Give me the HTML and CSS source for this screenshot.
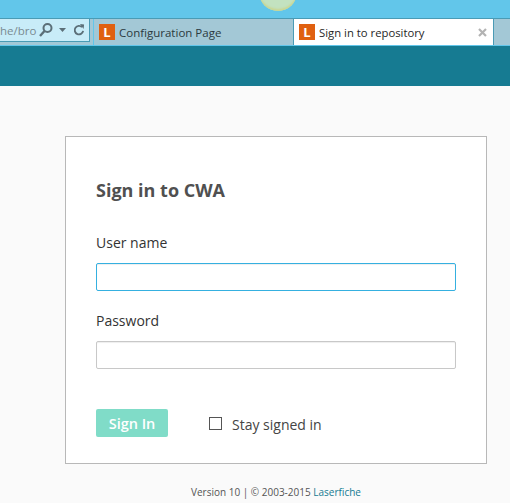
FILE: index.html
```html
<!DOCTYPE html>
<html lang="en">
<head>
    <meta charset="UTF-8">
    <title>Sign in to repository</title>
    <link rel="stylesheet" href="styles.css">
</head>
<body>

<div class="orb"></div>

<div class="chrome">
    <div class="tabrow">
        <div class="address">
            <span class="url">he/bro</span>
            <svg class="search" width="16" height="16" viewBox="0 0 16 16">
                <circle cx="9.5" cy="6" r="4" fill="none" stroke="#5b6f78" stroke-width="2"/>
                <path d="M6.5 9 L2 14" stroke="#5b6f78" stroke-width="2.4"/>
            </svg>
            <svg class="caret" width="7" height="4" viewBox="0 0 7 4">
                <path d="M0 0 H7 L3.5 4 Z" fill="#5b6f78"/>
            </svg>
            <svg class="reload" width="12" height="14" viewBox="0 0 13 14">
                <path d="M9.8 4 A4.6 4.6 0 1 0 11 8" fill="none" stroke="#5b6f78" stroke-width="2"/>
                <path d="M7.5 0.5 L12 1 L11.5 6 Z" fill="#5b6f78"/>
            </svg>
        </div>
        <div class="tab">
            <span class="favicon">L</span>
            <span class="tabtitle">Configuration Page</span>
        </div>
        <div class="tab active">
            <span class="favicon">L</span>
            <span class="tabtitle">Sign in to repository</span>
            <svg class="close" width="9" height="9" viewBox="0 0 9 9">
                <path d="M1 1 L8 8 M8 1 L1 8" stroke="#b3b3b3" stroke-width="2.2"/>
            </svg>
        </div>
    </div>
</div>

<header class="banner"></header>

<main class="page">
    <form class="card">
        <h1>Sign in to CWA</h1>

        <label class="field-label">User name</label>
        <input class="field focused" type="text">

        <label class="field-label">Password</label>
        <input class="field" type="password">

        <div class="actions">
            <button class="signin" type="button">Sign In</button>
            <span class="checkbox"></span>
            <span class="stay">Stay signed in</span>
        </div>
    </form>

    <footer class="version">Version 10 | © 2003-2015 <a href="#">Laserfiche</a></footer>
</main>

</body>
</html>
```

FILE: styles.css
```css
html, body {
    margin: 0;
    height: 503px;
    overflow: hidden;
}

body {
    background-color: #fafafa;
    font-family: "Open Sans", "Noto Sans", sans-serif;
}

/* browser window */
.chrome {
    height: 46px;
    box-sizing: border-box;
    padding-top: 18px;
    background-color: #62c6ea;
}

.orb {
    position: absolute;
    top: -27px;
    left: 259px;
    width: 38px;
    height: 38px;
    border-radius: 50%;
    background-color: #c3e2c0;
    box-shadow: inset 0 -2px 2px #c9d692;
}

.tabrow {
    display: flex;
    height: 28px;
    box-sizing: border-box;
    background-color: #a3c8d6;
    border-top: 1px solid #4a9bb5;
    border-bottom: 1px solid #62c6ea;
}

.address {
    display: flex;
    align-items: center;
    width: 90px;
    height: 24px;
    margin-top: -1px;
    margin-right: 3px;
    box-sizing: border-box;
    border: 1px solid #4a9bb5;
    border-left: none;
    background-color: #c8ecf8;
    color: #7a8a90;
    font-size: 11.5px;
}

.url {
    width: 36px;
    white-space: nowrap;
}

.search {
    margin-left: 2px;
}

.caret {
    margin-left: 5px;
}

.reload {
    margin-left: 7px;
}

.tab {
    display: flex;
    align-items: center;
    width: 200px;
    box-sizing: border-box;
    padding-left: 5px;
    border-left: 1px solid #62c6ea;
    color: #2b3a40;
    font-size: 11.5px;
}

.tab.active {
    width: 201px;
    background-color: #fff;
    border-left: 1px solid #4a9bb5;
    border-right: 1px solid #4a9bb5;
    color: #1f1f1f;
    font-size: 11.3px;
}

.favicon {
    width: 16px;
    height: 16px;
    margin-right: 4px;
    background-color: #e06010;
    color: #fff;
    font-size: 13px;
    font-weight: 700;
    line-height: 16px;
    text-align: center;
}

.close {
    margin-left: auto;
    margin-right: 6px;
}

.banner {
    height: 40px;
    background-color: #167b92;
}

/* sign in */
.page {
    padding-top: 50px;
}

.card {
    width: 422px;
    height: 328px;
    margin-left: 65px;
    box-sizing: border-box;
    padding: 40px 30px 0;
    background-color: #fff;
    border: 1px solid #b8b8b8;
}

h1 {
    margin: 0 0 30px;
    color: #505050;
    font-size: 18px;
    font-weight: 700;
    line-height: 26px;
}

.field-label {
    display: block;
    margin-bottom: 10px;
    color: #333;
    font-size: 14px;
    line-height: 20px;
}

.field {
    display: block;
    width: 360px;
    height: 28px;
    margin: 0 0 20px;
    box-sizing: border-box;
    background-color: #fff;
    border: 1px solid #c8c8c8;
    border-radius: 2px;
    box-shadow: inset 0 1px 1px #eee;
    outline: none;
}

.field.focused {
    border-color: #35b0e0;
}

.actions {
    display: flex;
    align-items: center;
    margin-top: 40px;
}

.signin {
    width: 72px;
    height: 28px;
    padding: 0;
    background-color: #80dcc8;
    border: none;
    border-radius: 2px;
    color: #fff;
    font-family: inherit;
    font-size: 14.5px;
    font-weight: 600;
}

.checkbox {
    width: 13px;
    height: 13px;
    margin-left: 41px;
    margin-top: 1px;
    box-sizing: border-box;
    background-color: #fff;
    border: 1px solid #555;
}

.stay {
    margin-left: 10px;
    margin-top: 2px;
    color: #444;
    font-size: 14px;
}

.version {
    width: 422px;
    margin: 21px 0 0 65px;
    color: #555;
    font-size: 10px;
    line-height: 14px;
    text-align: center;
}

.version a {
    color: #167b92;
    text-decoration: none;
}
```
